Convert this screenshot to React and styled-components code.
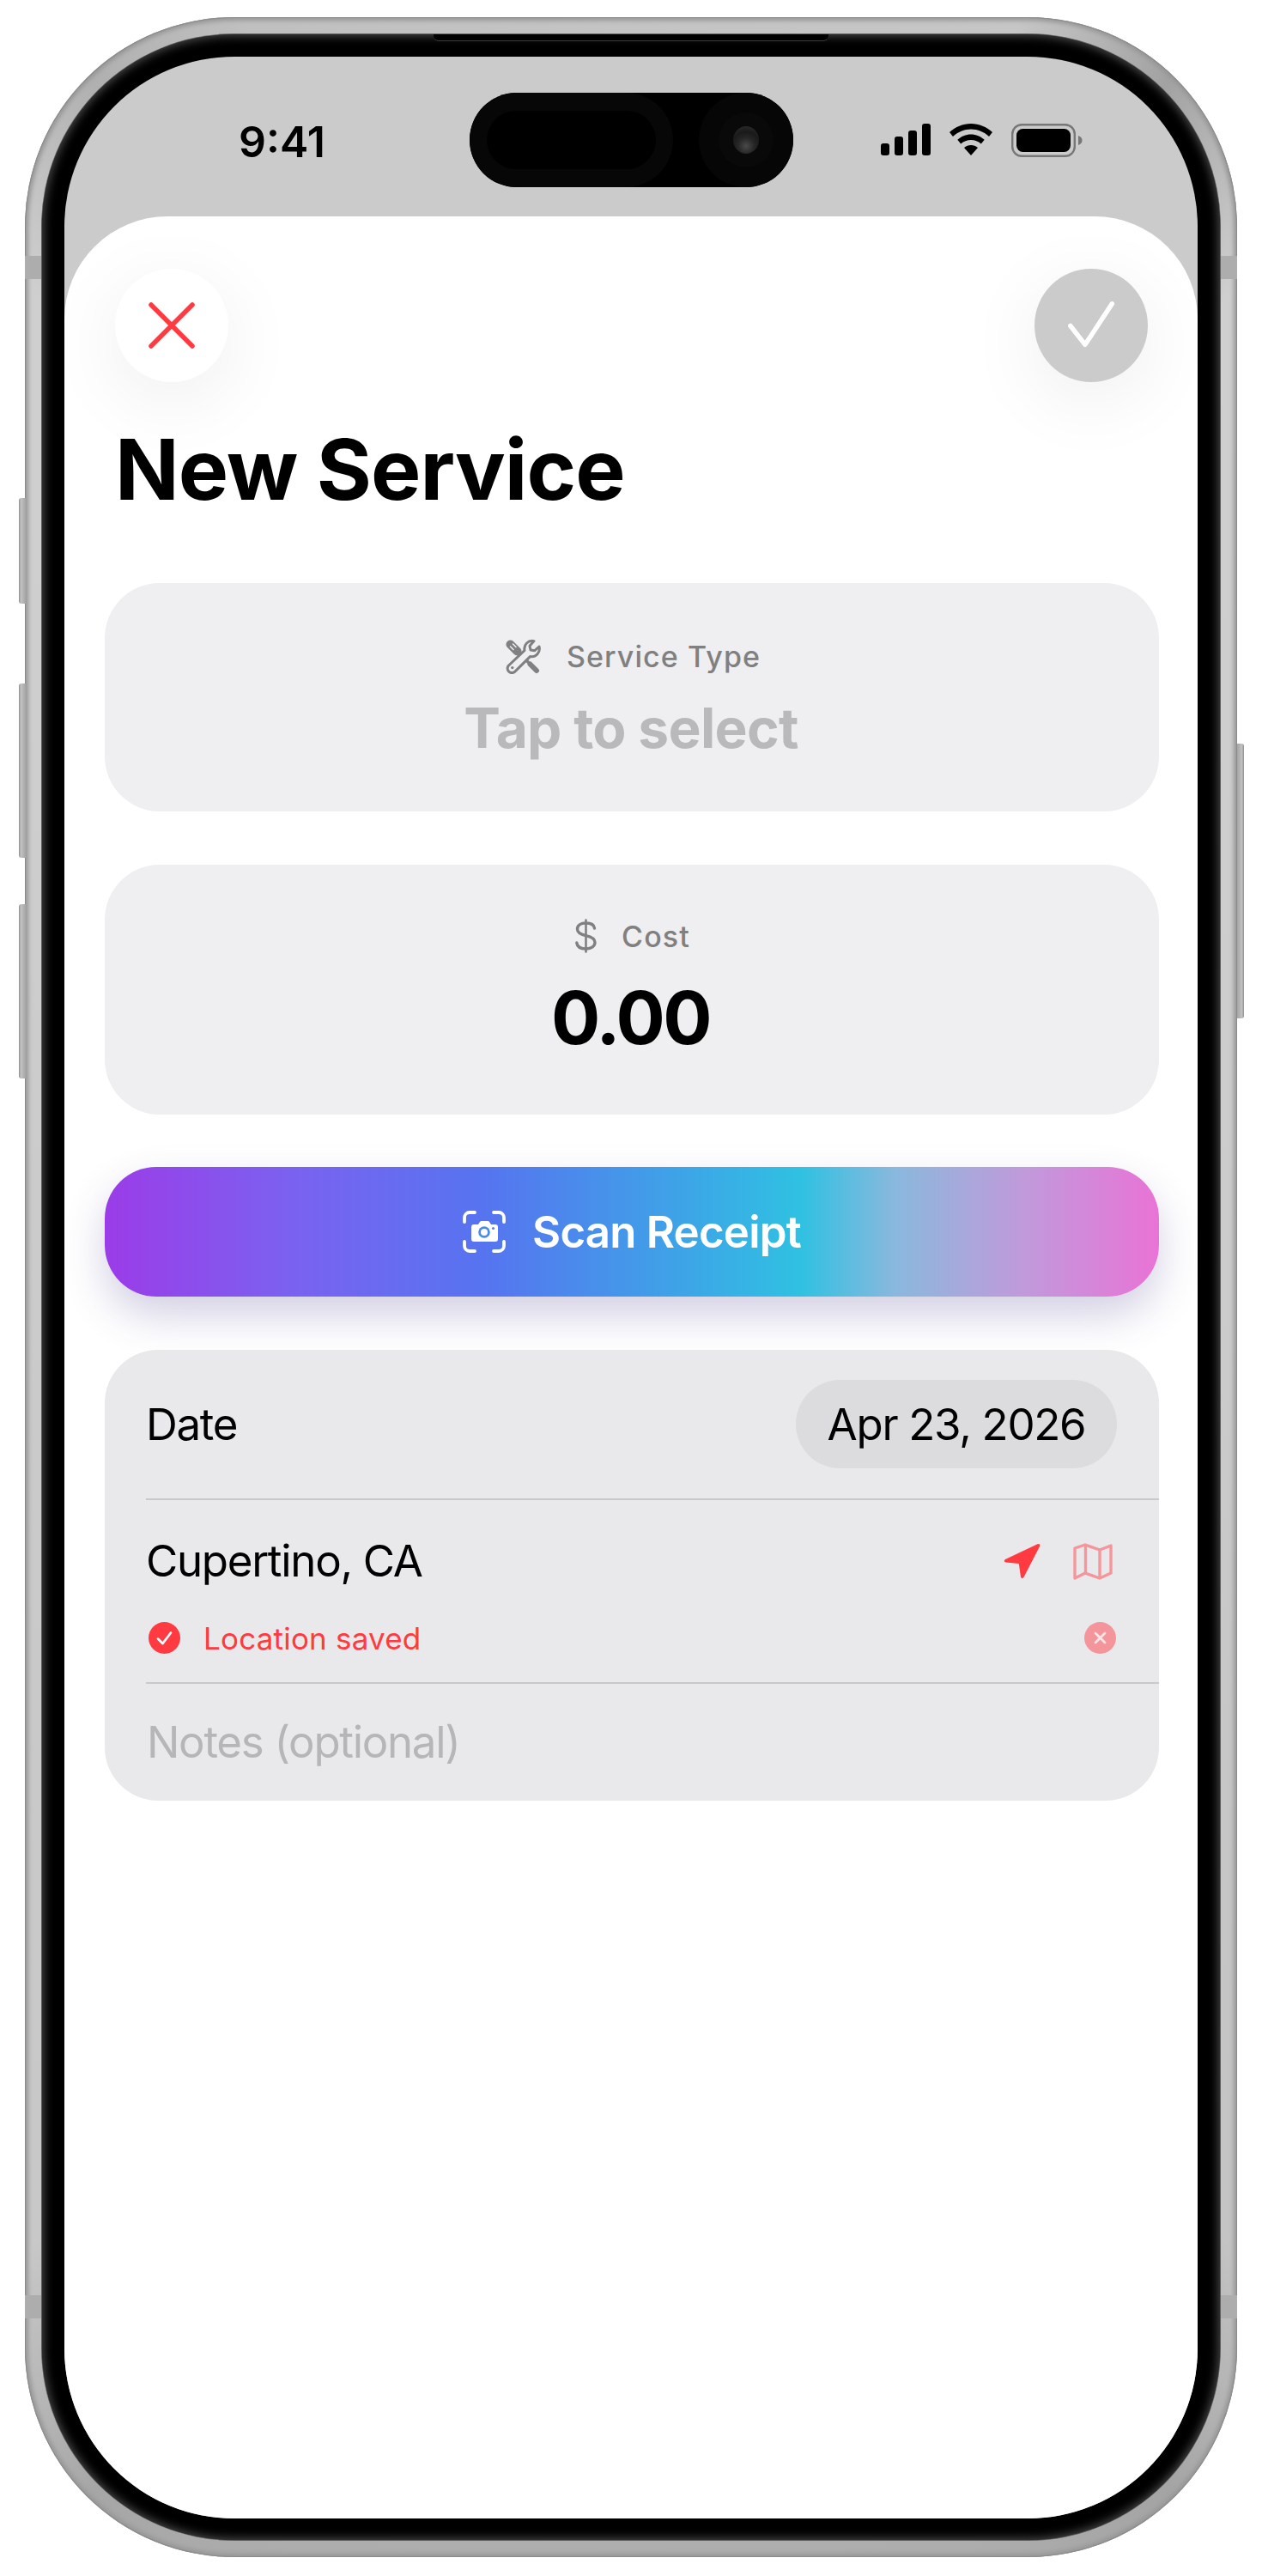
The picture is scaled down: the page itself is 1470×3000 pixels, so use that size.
import React from "react";
import styled, { createGlobalStyle } from "styled-components";

const Global = createGlobalStyle`
  html, body { margin: 0; padding: 0; background: #fff; }
  body { font-family: Inter, "Noto Sans", sans-serif; }
  * { box-sizing: border-box; }
`;

const Stage = styled.div`
  width: 1470px;
  height: 3000px;
  padding: 20px 29px 0;
  background: #fff;
`;

const Frame = styled.div`
  position: relative;
  width: 1412px;
  height: 2958px;
  padding: 20px;
  border-radius: 244px;
  background: conic-gradient(
    from 0deg at 50% 50%,
    #c4c4c4 0deg,
    #c6c6c6 17deg,
    #a2a2a2 24deg,
    #cfcfcf 31deg,
    #cbcbcb 100deg,
    #c4c4c4 148deg,
    #a4a4a4 156deg,
    #adadad 165deg,
    #aeaeae 180deg,
    #adadad 195deg,
    #a6a6a6 204deg,
    #c8c8c8 212deg,
    #cbcbcb 280deg,
    #cfcfcf 329deg,
    #b0b0b0 336deg,
    #c0c0c0 343deg,
    #c4c4c4 360deg
  );
  box-shadow: inset 0 0 0 1px #8b8b8b, inset 0 0 5px 4px #979797;
`;

const SideButton = styled.div`
  position: absolute;
  top: ${(p) => p.$top}px;
  height: ${(p) => p.$height}px;
  width: 8px;
  ${(p) => (p.$right ? "right: -8px; border-radius: 0 3px 3px 0;" : "left: -7px; border-radius: 3px 0 0 3px;")}
  background: linear-gradient(${(p) => (p.$right ? "270deg" : "90deg")}, #8e8e8e 0, #c2c2c2 30%, #a5a5a5 100%);
`;

const AntennaBand = styled.div`
  position: absolute;
  top: ${(p) => p.$top}px;
  ${(p) => (p.$right ? "right: 0;" : "left: 0;")}
  width: 20px;
  height: 27px;
  background: #adadad;
`;

const Bezel = styled.div`
  position: relative;
  height: 100%;
  padding: 26px 26px 25px;
  border-radius: 224px;
  background: #000;
  box-shadow: 0 0 0 1px #5c5c5c, inset 0 0 11px 2px #4a4a4a;
`;

const SpeakerNotch = styled.div`
  position: absolute;
  top: 0;
  left: 50%;
  width: 460px;
  height: 8px;
  transform: translateX(-50%);
  background: #000;
  border-bottom: 1px solid #3a3a3a;
  border-radius: 0 0 6px 6px;
`;

const Screen = styled.div`
  display: flex;
  flex-direction: column;
  height: 100%;
  overflow: hidden;
  border-radius: 198px;
  background: #cbcbcb;
`;

const StatusBar = styled.div`
  display: grid;
  grid-template-columns: 472px 377px 1fr;
  flex: 0 0 186px;
  padding-top: 42px;
`;

const Time = styled.div`
  padding: 27px 0 0 203px;
  font-size: 50px;
  line-height: 60px;
  font-weight: 600;
  color: #000;
`;

const Island = styled.div`
  position: relative;
  display: flex;
  align-items: center;
  justify-content: space-between;
  height: 110px;
  border-radius: 55px;
  background: #000;
`;

const IslandPill = styled.div`
  display: flex;
  align-items: center;
  justify-content: center;
  width: 237px;
  height: 110px;
  border-radius: 55px;
  background: #070707;
`;

const IslandInner = styled.div`
  width: 197px;
  height: 68px;
  border-radius: 34px;
  background: #000;
`;

const Camera = styled.div`
  display: flex;
  align-items: center;
  justify-content: center;
  width: 110px;
  height: 110px;
  border-radius: 50%;
  background: #060606;
`;

const CameraRing = styled.div`
  display: flex;
  align-items: center;
  justify-content: center;
  width: 64px;
  height: 64px;
  border-radius: 50%;
  background: #090909;
`;

const Lens = styled.div`
  width: 30px;
  height: 32px;
  border-radius: 50%;
  background: radial-gradient(circle at 50% 72%, #4a4a4a 0, #262626 35%, #1a1a1a 60%, #303030 100%);
`;

const StatusIcons = styled.div`
  display: flex;
  align-items: flex-start;
  gap: 22px;
  padding: 36px 0 0 102px;
`;

const Sheet = styled.div`
  flex: 1;
  padding: 0 45px 0 47px;
  border-radius: 120px 120px 0 0;
  background: #fff;
`;

const NavRow = styled.div`
  display: flex;
  justify-content: space-between;
  padding: 61px 13px 0 12px;
`;

const RoundButton = styled.div`
  display: flex;
  align-items: center;
  justify-content: center;
  width: 132px;
  height: 132px;
  border-radius: 50%;
  background: ${(p) => (p.$muted ? "#cbcbcb" : "#fff")};
  box-shadow: 0 20px 90px rgba(30, 30, 60, 0.07);
`;

const Title = styled.h1`
  margin: 40px 0 0 12px;
  font-size: 98px;
  line-height: 124px;
  font-weight: 700;
  letter-spacing: -0.9px;
  color: #000;
`;

const Card = styled.div`
  display: flex;
  flex-direction: column;
  align-items: center;
  height: ${(p) => p.$height}px;
  margin-top: ${(p) => p.$top}px;
  padding-top: ${(p) => p.$pad}px;
  border-radius: 64px;
  background: #efeff1;
`;

const CardLabel = styled.div`
  display: flex;
  align-items: center;
  gap: ${(p) => p.$gap}px;
  height: 44px;
  margin-left: 2px;
  font-size: 34px;
  font-weight: 500;
  letter-spacing: 1.1px;
  color: #808080;
`;

const Placeholder = styled.div`
  margin: 22px 2px 0 0;
  font-size: 64px;
  line-height: 80px;
  font-weight: 700;
  letter-spacing: -0.7px;
  color: #b9b9bb;
`;

const Amount = styled.div`
  margin: 22px 3px 0 0;
  font-size: 85px;
  line-height: 104px;
  font-weight: 700;
  letter-spacing: -2.6px;
  color: #000;
`;

const ScanButton = styled.div`
  display: flex;
  align-items: center;
  justify-content: center;
  gap: 31px;
  height: 151px;
  margin-top: 61px;
  border-radius: 60px;
  background: linear-gradient(90deg, #9b3ce8 0%, #7a62f0 18%, #5674f0 36%, #2fc1e2 66%, #8ab8dd 75%, #c09adb 87%, #e973d6 100%);
  box-shadow: 0 22px 48px rgba(70, 60, 140, 0.24);
  color: #fff;
  font-size: 51px;
  font-weight: 600;
  letter-spacing: -0.8px;
`;

const Group = styled.div`
  height: 525px;
  margin-top: 62px;
  overflow: hidden;
  border-radius: 62px;
  background: #e9e9eb;
`;

const DateRow = styled.div`
  display: flex;
  align-items: center;
  justify-content: space-between;
  height: 173px;
  padding: 0 49px 0 48px;
`;

const RowText = styled.div`
  font-size: 51px;
  line-height: 62px;
  letter-spacing: -1.3px;
  color: ${(p) => (p.$muted ? "#b6b6b8" : "#000")};
`;

const DatePill = styled.div`
  display: flex;
  align-items: center;
  justify-content: center;
  width: 374px;
  height: 103px;
  border-radius: 52px;
  background: #dcdcde;
  font-size: 51px;
  letter-spacing: -1.3px;
  color: #000;
`;

const Divider = styled.div`
  height: 2px;
  margin-left: 48px;
  background: #c9c9cb;
`;

const LocationBlock = styled.div`
  display: flex;
  flex-direction: column;
  height: 212px;
`;

const LocationTop = styled.div`
  display: flex;
  align-items: center;
  justify-content: space-between;
  height: 142px;
  padding: 0 54px 0 48px;
`;

const LocationActions = styled.div`
  display: flex;
  align-items: center;
  gap: 38px;
`;

const LocationStatus = styled.div`
  display: flex;
  align-items: center;
  justify-content: space-between;
  height: 37px;
  padding: 0 50px 0 51px;
`;

const StatusLeft = styled.div`
  display: flex;
  align-items: center;
  gap: 27px;
  color: #ff3a40;
  font-size: 35px;
  letter-spacing: 0.2px;
`;

const NotesRow = styled.div`
  display: flex;
  align-items: center;
  height: 136px;
  padding: 0 49px;
`;

const Check = () => (
  <svg width="56" height="56" viewBox="0 0 56 56" fill="none">
    <path d="M3 30 L21 53 L54 3" stroke="#fff" strokeWidth="5.8" strokeLinecap="round" strokeLinejoin="round" transform="translate(1 0) scale(.95)" />
  </svg>
);

const CloseX = () => (
  <svg width="54" height="54" viewBox="0 0 54 54" fill="none">
    <path d="M3 3 L51 51 M51 3 L3 51" stroke="#ff3a40" strokeWidth="5.5" strokeLinecap="round" />
  </svg>
);

const Signal = () => (
  <svg width="58" height="37" viewBox="0 0 58 37" fill="#000">
    <rect x="0" y="23" width="10" height="14" rx="3" />
    <rect x="16" y="15" width="10" height="22" rx="3" />
    <rect x="32" y="8" width="10" height="29" rx="3" />
    <rect x="48" y="0" width="10" height="37" rx="3" />
  </svg>
);

const Wifi = () => (
  <svg width="50" height="37" viewBox="0 0 50 37" fill="#000">
    <path d="M25 0 C34.5 0 43 3.7 50 10 L46 15 C40 9.7 33 6.6 25 6.6 C17 6.6 10 9.7 4 15 L0 10 C7 3.7 15.5 0 25 0 Z" />
    <path d="M25 12.5 C31 12.5 36.5 14.8 40.7 18.8 L36.8 23.5 C33.5 20.6 29.5 19 25 19 C20.5 19 16.5 20.6 13.2 23.5 L9.3 18.8 C13.5 14.8 19 12.5 25 12.5 Z" />
    <path d="M25 25 C28 25 30.7 26 33 27.9 L25 37 L17 27.9 C19.3 26 22 25 25 25 Z" />
  </svg>
);

const Battery = () => (
  <svg width="83" height="39" viewBox="0 0 83 39">
    <rect x="1.2" y="1.2" width="72.6" height="36.6" rx="11" fill="none" stroke="#777" strokeWidth="2.4" />
    <rect x="6" y="6" width="63" height="27" rx="7.5" fill="#000" />
    <path d="M78 14 C81 15 82.5 17 82.5 19.5 C82.5 22 81 24 78 25 Z" fill="#777" />
  </svg>
);

const Tools = () => (
  <svg width="42" height="41" viewBox="0 0 42 41" fill="none">
    <path d="M6.5 6.5 L14.5 14.5" stroke="#808080" strokeWidth="10" strokeLinecap="round" />
    <path d="M6.5 9 L10 12.5 M9.5 6 L13 9.5" stroke="#efeff1" strokeWidth="1.5" strokeLinecap="round" />
    <path d="M15 15 L32 32" stroke="#808080" strokeWidth="3.5" />
    <path d="M29.5 29.5 L37 37" stroke="#808080" strokeWidth="6" strokeLinecap="round" />
    <path
      d="M34 2.6 A 9.2 9.2 0 0 0 23 13.5 L5.6 30 A 5.2 5.2 0 1 0 12.6 37.4 L29.5 20.6 A 9.2 9.2 0 0 0 40 9 L34.6 13.8 L30 13 L29 8.2 Z"
      fill="#efeff1"
      stroke="#808080"
      strokeWidth="3"
      strokeLinejoin="round"
    />
    <circle cx="8.8" cy="33.6" r="1.7" fill="#808080" />
  </svg>
);

const Dollar = () => (
  <svg width="25" height="40" viewBox="0 0 25 40" fill="none" stroke="#808080" strokeWidth="3.4" strokeLinecap="round">
    <path d="M12.5 1.5 V38.5" strokeWidth="2.6" />
    <path d="M22.5 11 C22 7 18 5 12.5 5 C6.5 5 2.5 7.8 2.5 12 C2.5 16.5 6.5 18.3 12.5 19.6 C19 21 23 23 23 27.6 C23 32 18.8 35 12.7 35 C6.5 35 2.3 32.5 1.8 28" />
  </svg>
);

const ScanIcon = () => (
  <svg width="50" height="49" viewBox="0 0 50 49" fill="none">
    <path
      d="M2 13 V8 A6 6 0 0 1 8 2 H14 M36 2 H42 A6 6 0 0 1 48 8 V13 M48 36 V41 A6 6 0 0 1 42 47 H36 M14 47 H8 A6 6 0 0 1 2 41 V36"
      stroke="#fff"
      strokeWidth="3.8"
      strokeLinecap="round"
    />
    <path d="M13 16 H18 L20 13 Q20.5 12 22 12 H29 Q30.5 12 31 13 L33 16 H38 Q41 16 41 19 V33 Q41 36 38 36 H13 Q10 36 10 33 V19 Q10 16 13 16 Z" fill="#fff" />
    <circle cx="25" cy="25" r="6.8" fill="#4a8bea" />
    <circle cx="25" cy="25" r="4" fill="#fff" />
    <circle cx="35.5" cy="20.5" r="1.6" fill="#4a8bea" />
  </svg>
);

const NavArrow = () => (
  <svg width="43" height="42" viewBox="0 0 43 42" fill="#ff3a40">
    <path d="M39.5 1.2 L2 19 Q-0.8 21.5 2.5 22.5 L17.8 24 L20 39.5 Q21.5 42.8 23.5 39.8 L42 4 Q43 0 39.5 1.2 Z" />
  </svg>
);

const MapIcon = () => (
  <svg width="46" height="43" viewBox="0 0 46 43" fill="none" stroke="#f4969c" strokeWidth="3.4" strokeLinejoin="round">
    <path d="M2 6 L14 2 L31 8 L44 3 V35 L31 41 L14 35 L2 41 Z" />
    <path d="M14.5 2 V35 M31 8 V41" />
  </svg>
);

const SavedCheck = () => (
  <svg width="37" height="37" viewBox="0 0 37 37">
    <circle cx="18.5" cy="18.5" r="18.5" fill="#ff3a40" />
    <path d="M11 19.5 L16.5 25 L26 12.5" fill="none" stroke="#fff" strokeWidth="2.8" strokeLinecap="round" strokeLinejoin="round" />
  </svg>
);

const ClearIcon = () => (
  <svg width="37" height="37" viewBox="0 0 37 37">
    <circle cx="18.5" cy="18.5" r="18.5" fill="#f4959b" />
    <path d="M13 13 L24 24 M24 13 L13 24" stroke="#f6e6e8" strokeWidth="2.8" strokeLinecap="round" />
  </svg>
);

export default function App() {
  return (
    <>
      <Global />
      <Stage>
        <Frame>
          <SideButton $top={560} $height={123} />
          <SideButton $top={776} $height={203} />
          <SideButton $top={1033} $height={203} />
          <SideButton $right $top={846} $height={320} />
          <AntennaBand $top={278} />
          <AntennaBand $right $top={278} />
          <AntennaBand $top={2653} />
          <AntennaBand $right $top={2653} />
          <Bezel>
            <SpeakerNotch />
            <Screen>
              <StatusBar>
                <Time>9:41</Time>
                <Island>
                  <IslandPill>
                    <IslandInner />
                  </IslandPill>
                  <Camera>
                    <CameraRing>
                      <Lens />
                    </CameraRing>
                  </Camera>
                </Island>
                <StatusIcons>
                  <Signal />
                  <Wifi />
                  <Battery />
                </StatusIcons>
              </StatusBar>
              <Sheet>
                <NavRow>
                  <RoundButton>
                    <CloseX />
                  </RoundButton>
                  <RoundButton $muted>
                    <Check />
                  </RoundButton>
                </NavRow>
                <Title>New Service</Title>
                <Card $height={266} $top={70} $pad={63}>
                  <CardLabel $gap={30}>
                    <Tools />
                    Service Type
                  </CardLabel>
                  <Placeholder>Tap to select</Placeholder>
                </Card>
                <Card $height={291} $top={62} $pad={61}>
                  <CardLabel $gap={29}>
                    <Dollar />
                    Cost
                  </CardLabel>
                  <Amount>0.00</Amount>
                </Card>
                <ScanButton>
                  <ScanIcon />
                  Scan Receipt
                </ScanButton>
                <Group>
                  <DateRow>
                    <RowText>Date</RowText>
                    <DatePill>Apr 23, 2026</DatePill>
                  </DateRow>
                  <Divider />
                  <LocationBlock>
                    <LocationTop>
                      <RowText>Cupertino, CA</RowText>
                      <LocationActions>
                        <NavArrow />
                        <MapIcon />
                      </LocationActions>
                    </LocationTop>
                    <LocationStatus>
                      <StatusLeft>
                        <SavedCheck />
                        Location saved
                      </StatusLeft>
                      <ClearIcon />
                    </LocationStatus>
                  </LocationBlock>
                  <Divider />
                  <NotesRow>
                    <RowText $muted>Notes (optional)</RowText>
                  </NotesRow>
                </Group>
              </Sheet>
            </Screen>
          </Bezel>
        </Frame>
      </Stage>
    </>
  );
}
